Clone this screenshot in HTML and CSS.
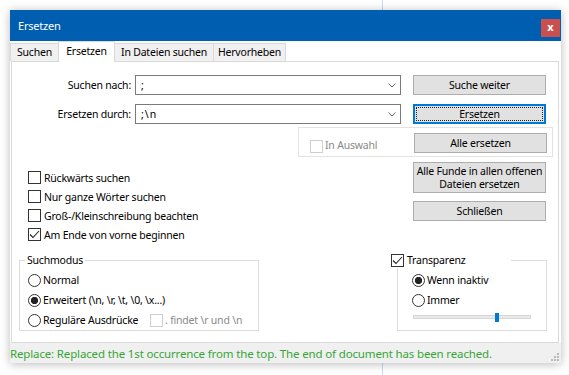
FILE: index.html
```html
<!DOCTYPE html>
<html lang="de">
<head>
<meta charset="utf-8">
<title>Ersetzen</title>
<link rel="stylesheet" href="styles.css">
</head>
<body>
<div class="window">
  <div class="titlebar">
    <span class="title">Ersetzen</span>
    <span class="close">x</span>
  </div>
  <div class="tabs">
    <div class="tab t1">Suchen</div>
    <div class="tab t2 active">Ersetzen</div>
    <div class="tab t3">In Dateien suchen</div>
    <div class="tab t4">Hervorheben</div>
  </div>
  <div class="panel">
    <div class="row">
      <span class="lbl">Suchen nach:</span>
      <div class="combo"><span class="val">;</span><svg class="chev" width="8" height="5" viewBox="0 0 8 5"><path d="M0.5 0.5 L4 4 L7.5 0.5" fill="none" stroke="#606060" stroke-width="1"/></svg></div>
      <button class="btn">Suche weiter</button>
    </div>
    <div class="row row2">
      <span class="lbl">Ersetzen durch:</span>
      <div class="combo"><span class="val">;\n</span><svg class="chev" width="8" height="5" viewBox="0 0 8 5"><path d="M0.5 0.5 L4 4 L7.5 0.5" fill="none" stroke="#606060" stroke-width="1"/></svg></div>
      <button class="btn focus">Ersetzen</button>
    </div>
    <div class="selbox">
      <span class="chk disabled"></span>
      <span class="dis-text">In Auswahl</span>
      <button class="btn push">Alle ersetzen</button>
    </div>
    <div class="mid">
      <div class="opts">
        <div class="opt"><span class="chk"></span><span>Rückwärts suchen</span></div>
        <div class="opt"><span class="chk"></span><span>Nur ganze Wörter suchen</span></div>
        <div class="opt"><span class="chk"></span><span>Groß-/Kleinschreibung beachten</span></div>
        <div class="opt"><span class="chk"><svg width="11" height="11" viewBox="0 0 11 11"><path d="M1 5.5 L4 8.5 L10 2" fill="none" stroke="#222" stroke-width="1.1"/></svg></span><span>Am Ende von vorne beginnen</span></div>
      </div>
      <div class="actions">
        <button class="btn tall">Alle Funde in allen offenen<br>Dateien ersetzen</button>
        <button class="btn">Schließen</button>
      </div>
    </div>
    <div class="groups">
      <fieldset class="grp mode">
        <legend>Suchmodus</legend>
        <div class="opt r"><span class="radio"></span><span>Normal</span></div>
        <div class="opt r"><span class="radio on"></span><span>Erweitert (\n, \r, \t, \0, \x...)</span></div>
        <div class="opt r"><span class="radio"></span><span class="regex">Reguläre Ausdrücke</span><span class="chk disabled"></span><span class="dis-text">. findet \r und \n</span></div>
      </fieldset>
      <fieldset class="grp transp">
        <legend><span class="chk"><svg width="11" height="11" viewBox="0 0 11 11"><path d="M1 5.5 L4 8.5 L10 2" fill="none" stroke="#222" stroke-width="1.1"/></svg></span><span>Transparenz</span></legend>
        <div class="opt r"><span class="radio on"></span><span>Wenn inaktiv</span></div>
        <div class="opt r"><span class="radio"></span><span>Immer</span></div>
        <div class="slider"><span class="thumb"></span></div>
      </fieldset>
    </div>
  </div>
  <div class="status">
    <span class="msg">Replace: Replaced the 1st occurrence from the top. The end of document has been reached.</span>
    <svg class="grip" width="8" height="8" viewBox="0 0 8 8">
      <rect x="6" y="0" width="2" height="2" fill="#b8b8b8"/>
      <rect x="3" y="3" width="2" height="2" fill="#b8b8b8"/>
      <rect x="6" y="3" width="2" height="2" fill="#b8b8b8"/>
      <rect x="0" y="6" width="2" height="2" fill="#b8b8b8"/>
      <rect x="3" y="6" width="2" height="2" fill="#b8b8b8"/>
      <rect x="6" y="6" width="2" height="2" fill="#b8b8b8"/>
    </svg>
  </div>
</div>
</body>
</html>
```
FILE: styles.css
```css
* { box-sizing: border-box; }
html, body { margin: 0; }
body {
  width: 569px;
  height: 375px;
  overflow: hidden;
  padding: 10px 0 0 10px;
  background: #fff linear-gradient(to right, transparent 382px, #c4dde9 382px, #c4dde9 383px, transparent 383px);
  font-family: "Noto Sans", "Segoe UI", sans-serif;
  font-size: 10.5px;
  letter-spacing: -0.2px;
  color: #000;
}
.window {
  width: 551px;
  height: 353px;
  background: #fff;
  box-shadow: 0 1px 9px rgba(0,0,0,0.28);
  display: flex;
  flex-direction: column;
}
.titlebar {
  height: 31px;
  flex-shrink: 0;
  background: #005eb0;
  color: #fff;
  font-size: 11px;
  display: flex;
  align-items: center;
  padding-left: 8px;
}
.title { flex: 1; margin-top: -1px; }
.close {
  width: 19px;
  height: 18px;
  align-self: flex-end;
  margin: 0 1px 4px 0;
  background: #c9504f;
  color: #fff;
  font-weight: bold;
  font-size: 11px;
  letter-spacing: 0;
  line-height: 16px;
  text-align: center;
}
.tabs {
  height: 20px;
  flex-shrink: 0;
  display: flex;
  align-items: flex-end;
}
.tab {
  height: 18px;
  background: #f0f0f0;
  border: 1px solid #d9d9d9;
  border-bottom: none;
  margin-left: -1px;
  text-align: center;
  line-height: 17px;
}
.tab.t1 { margin-left: 0; width: 49px; }
.tab.t2 { width: 57px; }
.tab.t3 { width: 100px; }
.tab.t4 { width: 73px; }
.tab.active {
  height: 21px;
  background: #fff;
  margin-bottom: -1px;
  position: relative;
  z-index: 1;
  line-height: 18px;
}
.panel {
  flex: 1;
  margin: 0 2px 0 1px;
  border: 1px solid #d9d9d9;
  background: #fff;
  padding-top: 13px;
}
.row {
  display: flex;
  align-items: center;
  height: 20px;
}
.row2 { margin-top: 9px; }
.lbl {
  width: 119px;
  text-align: right;
  margin-right: 4px;
}
.combo {
  width: 266px;
  height: 20px;
  border: 1px solid #7a7a7a;
  display: flex;
  align-items: center;
  justify-content: space-between;
  padding: 0 4px 0 5px;
}
.val { letter-spacing: 1px; }
.chev { margin-top: 1px; }
.btn {
  font-family: inherit;
  font-size: 10.5px;
  letter-spacing: -0.2px;
  color: #000;
  width: 133px;
  height: 20px;
  padding: 0;
  margin: 0 0 0 12px;
  border: 1px solid #adadad;
  background: #e1e1e1;
  line-height: 16px;
}
.btn.focus {
  border-color: #0078d7;
  box-shadow: inset 0 0 0 1px #0078d7;
  outline: 1px dotted #222;
  outline-offset: -4px;
}
.selbox {
  margin: 3px 0 0 286px;
  width: 255px;
  height: 30px;
  border: 1px solid #e3e3e3;
  display: flex;
  align-items: flex-start;
  padding-top: 5px;
}
.selbox .chk { margin: 7px 2px 0 11px; }
.selbox .dis-text { margin-top: 5px; }
.btn.push { margin-left: auto; margin-right: 5px; }
.dis-text { color: #8a8a8a; }
.chk {
  width: 13px;
  height: 13px;
  border: 1px solid #333;
  background: #fff;
  flex-shrink: 0;
  display: inline-flex;
  align-items: center;
  justify-content: center;
  margin-right: 3px;
}
.chk.disabled { border-color: #cfcfcf; }
.radio {
  width: 13px;
  height: 13px;
  border: 1px solid #333;
  border-radius: 50%;
  background: #fff;
  flex-shrink: 0;
  margin-right: 2px;
}
.radio.on {
  background: radial-gradient(circle, #222 0, #222 3.3px, #fff 4px);
}
.mid {
  display: flex;
  align-items: flex-start;
}
.opts {
  margin-left: 16px;
  padding-top: 11px;
}
.opt {
  display: flex;
  align-items: center;
  height: 19px;
}
.actions {
  margin-left: auto;
  margin-right: 12px;
  padding-top: 5px;
  display: flex;
  flex-direction: column;
  gap: 8px;
}
.actions .btn { margin-left: 0; }
.btn.tall { height: 31px; line-height: 13px; }
.groups {
  display: flex;
  align-items: stretch;
  margin-top: 8px;
}
.grp {
  margin: 0;
  min-width: 0;
  border: 1px solid #dcdcdc;
  padding: 2px 0 0 8px;
}
.grp legend {
  line-height: 16px;
  padding: 0 2px;
  margin-left: -3px;
}
.mode { margin-left: 7px; width: 240px; }
.transp { margin-left: 138px; width: 150px; padding-left: 14px; }
.transp legend {
  width: 120px;
  padding: 0;
  margin-left: -21px;
  display: flex;
  align-items: center;
}
.opt.r { height: 20px; }
.regex { width: 107px; }
.opt.r .chk.disabled { margin-right: 2px; }
.slider {
  margin: 5px 0 0 1px;
  width: 118px;
  height: 4px;
  border: 1px solid #d6d6d6;
  background: #e7eaea;
  display: flex;
  align-items: center;
}
.thumb {
  flex-shrink: 0;
  width: 4px;
  height: 9px;
  margin-left: 81px;
  background: #0078d7;
}
.status {
  height: 20px;
  flex-shrink: 0;
  background: #f0f0f0;
  display: flex;
  align-items: center;
  padding-left: 0;
}
.msg {
  flex: 1;
  color: #36a636;
  font-size: 11.5px;
  letter-spacing: -0.15px;
}
.grip { margin: 7px 2px 0 0; }
```
